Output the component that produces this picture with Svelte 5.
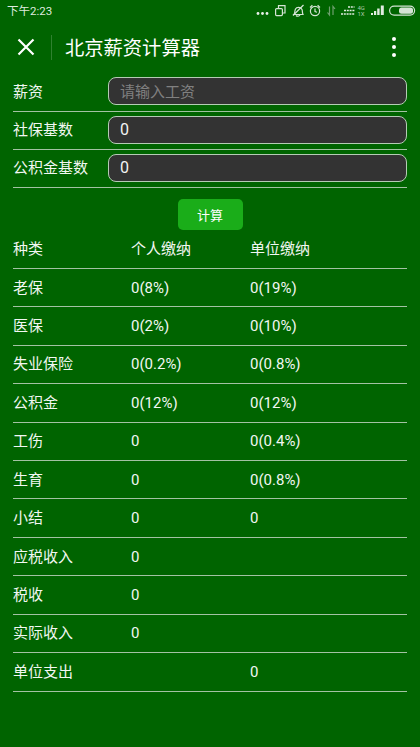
<script>
  let salary = "";
  let socialBase = 0;
  let fundBase = 0;

  const rows = [
    { name: "老保", personal: "0(8%)", company: "0(19%)" },
    { name: "医保", personal: "0(2%)", company: "0(10%)" },
    { name: "失业保险", personal: "0(0.2%)", company: "0(0.8%)" },
    { name: "公积金", personal: "0(12%)", company: "0(12%)" },
    { name: "工伤", personal: "0", company: "0(0.4%)" },
    { name: "生育", personal: "0", company: "0(0.8%)" },
    { name: "小结", personal: "0", company: "0" },
    { name: "应税收入", personal: "0", company: "" },
    { name: "税收", personal: "0", company: "" },
    { name: "实际收入", personal: "0", company: "" },
    { name: "单位支出", personal: "", company: "0" }
  ];
</script>

<main>
  <div class="status">
    <span class="time">下午2:23</span>
    <svg width="170" height="24" viewBox="0 0 170 24" fill="none" stroke="#d4e4d4" stroke-width="1.2">
      <g fill="#e8f0e8" stroke="none">
        <circle cx="8" cy="13.500" r="1.400" /><circle cx="12.500" cy="13.500" r="1.400" /><circle cx="17" cy="13.500" r="1.400" />
      </g>
      <!-- copy -->
      <rect x="25.600" y="8.600" width="6.800" height="7" rx="1" />
      <path d="M28.500 8.500V5.600h6.500v7.400h-2.500" />
      <!-- muted bell -->
      <path d="M44 14.500c1-1 .5-3.500 1.500-5.500s5-2.500 6.500.5c.7 1.600 0 3 1 5zM46 15.500c1 1 3 1 4-.5" />
      <path d="M43 15.500L53.500 5" />
      <!-- alarm -->
      <circle cx="65" cy="11" r="4.600" />
      <path d="M65 8.500v3l2 .8M60 7.500l2.400-2.200M70 7.500l-2.400-2.200" />
      <!-- data arrows -->
      <path d="M79.500 6.500v8.500l-2-2.500M83 15V6.500l2 2.500" stroke="#6fa06f" />
      <!-- wifi bars -->
      <g stroke="#e0ece0" stroke-width="1.700" stroke-dasharray="2 .8">
        <path d="M98 7h6.500M94 10.500h10.500M91 14h13.500" />
      </g>
      <text x="107.500" y="10" class="tiny">4G</text>
      <text x="107.500" y="15.500" class="tiny">1X</text>
      <!-- signal -->
      <g stroke="none" fill="#e0ece0">
        <rect x="121" y="13" width="2" height="2" />
        <rect x="124" y="11" width="2.200" height="4" />
        <rect x="127.200" y="8.500" width="2.400" height="6.500" />
        <rect x="130.800" y="5.500" width="3" height="9.500" />
      </g>
      <!-- battery -->
      <rect x="139.600" y="6.100" width="25" height="9" rx="4.500" />
      <rect x="149" y="7.500" width="14" height="6.200" rx="2.500" fill="#d4e4d4" stroke="none" />
    </svg>
  </div>

  <header>
    <svg class="close" width="18" height="18" viewBox="0 0 18 18" fill="none" stroke="#fff" stroke-width="2.200">
      <path d="M1.500 1.500l15 15M16.500 1.500l-15 15" />
    </svg>
    <span class="divider"></span>
    <h1>北京薪资计算器</h1>
    <div class="more"><i></i><i></i><i></i></div>
  </header>

  <form on:submit|preventDefault>
    <label>
      <span>薪资</span>
      <input bind:value={salary} placeholder="请输入工资" />
    </label>
    <label>
      <span>社保基数</span>
      <input bind:value={socialBase} />
    </label>
    <label>
      <span>公积金基数</span>
      <input bind:value={fundBase} />
    </label>
    <button type="submit">计算</button>
  </form>

  <div class="table">
    <div class="row">
      <span>种类</span><span>个人缴纳</span><span>单位缴纳</span>
    </div>
    {#each rows as row}
      <div class="row">
        <span>{row.name}</span><span>{row.personal}</span><span>{row.company}</span>
      </div>
    {/each}
  </div>
</main>

<style>
  :global(body) {
    margin: 0;
    background: #006400;
  }
  main {
    height: 747px;
    overflow: hidden;
    background: #006400;
    color: #f2f7f2;
    font-family: Roboto, "Noto Sans CJK SC", sans-serif;
  }
  .status {
    display: flex;
    justify-content: space-between;
    height: 24px;
    padding-left: 7px;
  }
  .time {
    font-size: 11.500px;
    line-height: 22px;
    color: #dfeadf;
  }
  .tiny {
    font-size: 6px;
    fill: #a9c6a9;
    stroke: none;
  }
  header {
    display: flex;
    align-items: center;
    height: 46px;
    padding: 0 24px 0 17px;
  }
  .divider {
    width: 1px;
    height: 25px;
    margin: 0 13px 0 16px;
    background: #2f812f;
  }
  h1 {
    flex: 1;
    margin: 0;
    padding-bottom: 1px;
    font-size: 19.300px;
    font-weight: 400;
    color: #fff;
  }
  .more {
    display: flex;
    flex-direction: column;
    gap: 4.200px;
  }
  .more i {
    width: 4px;
    height: 4px;
    border-radius: 50%;
    background: #fff;
  }
  form {
    display: flex;
    flex-direction: column;
    padding: 3.200px 13px 0;
  }
  label {
    display: flex;
    align-items: center;
    height: 38.400px;
    box-sizing: border-box;
    padding-bottom: 1.500px;
    border-bottom: 1px solid #a3c2a3;
    font-size: 15px;
  }
  label span {
    width: 95px;
    padding-bottom: 2px;
  }
  input {
    flex: 1;
    min-width: 0;
    box-sizing: border-box;
    height: 28px;
    padding: 0 11px;
    border: 1px solid #b5ccb5;
    border-radius: 8px;
    background: #333;
    color: #f2f2f2;
    font: inherit;
    font-size: 16px;
    outline: none;
  }
  input::placeholder {
    color: #808080;
    font-size: 15px;
  }
  button {
    align-self: center;
    width: 65px;
    height: 31px;
    margin-top: 11px;
    border: none;
    border-radius: 5px;
    background: #1aad19;
    color: #fff;
    font: inherit;
    font-size: 13px;
  }
  .table {
    padding: 0 13px;
  }
  .row {
    display: grid;
    grid-template-columns: 118px 119px 1fr;
    align-items: center;
    height: 38.450px;
    box-sizing: border-box;
    border-bottom: 1px solid #a3c2a3;
    font-size: 15px;
    line-height: 22px;
  }
</style>
